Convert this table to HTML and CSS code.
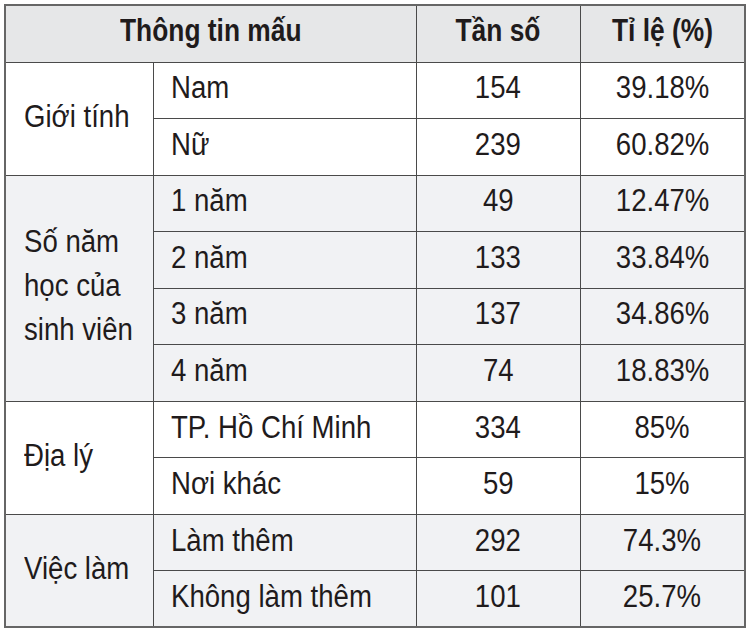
FILE: index.html
```html
<!DOCTYPE html>
<html lang="vi">
<head>
<meta charset="utf-8">
<title>Thông tin mẫu</title>
<link rel="stylesheet" href="styles.css">
</head>
<body>
<table class="stats">
  <colgroup>
    <col class="c1"><col class="c2"><col class="c3"><col class="c4">
  </colgroup>
  <thead>
    <tr class="head">
      <th colspan="2"><span class="t">Thông tin mấu</span></th>
      <th><span class="t">Tần số</span></th>
      <th><span class="t">Tỉ lệ (%)</span></th>
    </tr>
  </thead>
  <tbody class="grp">
    <tr>
      <td rowspan="2" class="g"><span class="t l">Giới tính</span></td>
      <td class="lbl"><span class="t l">Nam</span></td>
      <td><span class="t">154</span></td>
      <td><span class="t">39.18%</span></td>
    </tr>
    <tr>
      <td class="lbl"><span class="t l">Nữ</span></td>
      <td><span class="t">239</span></td>
      <td><span class="t">60.82%</span></td>
    </tr>
  </tbody>
  <tbody class="grp alt">
    <tr>
      <td rowspan="4" class="g"><span class="t l multi">Số năm<br>học của<br>sinh viên</span></td>
      <td class="lbl"><span class="t l">1 năm</span></td>
      <td><span class="t">49</span></td>
      <td><span class="t">12.47%</span></td>
    </tr>
    <tr>
      <td class="lbl"><span class="t l">2 năm</span></td>
      <td><span class="t">133</span></td>
      <td><span class="t">33.84%</span></td>
    </tr>
    <tr>
      <td class="lbl"><span class="t l">3 năm</span></td>
      <td><span class="t">137</span></td>
      <td><span class="t">34.86%</span></td>
    </tr>
    <tr>
      <td class="lbl"><span class="t l">4 năm</span></td>
      <td><span class="t">74</span></td>
      <td><span class="t">18.83%</span></td>
    </tr>
  </tbody>
  <tbody class="grp">
    <tr>
      <td rowspan="2" class="g"><span class="t l">Địa lý</span></td>
      <td class="lbl"><span class="t l">TP. Hồ Chí Minh</span></td>
      <td><span class="t">334</span></td>
      <td><span class="t">85%</span></td>
    </tr>
    <tr>
      <td class="lbl"><span class="t l">Nơi khác</span></td>
      <td><span class="t">59</span></td>
      <td><span class="t">15%</span></td>
    </tr>
  </tbody>
  <tbody class="grp alt">
    <tr>
      <td rowspan="2" class="g"><span class="t l">Việc làm</span></td>
      <td class="lbl"><span class="t l">Làm thêm</span></td>
      <td><span class="t">292</span></td>
      <td><span class="t">74.3%</span></td>
    </tr>
    <tr>
      <td class="lbl"><span class="t l">Không làm thêm</span></td>
      <td><span class="t">101</span></td>
      <td><span class="t">25.7%</span></td>
    </tr>
  </tbody>
</table>
</body>
</html>
```
FILE: styles.css
```css
html, body {
  margin: 0;
  padding: 0;
  background: #ffffff;
}

body {
  padding: 4px;
  font-family: "Liberation Sans", Arial, sans-serif;
  color: #1f1b1c;
}

.stats {
  border-collapse: collapse;
  width: 740px;
  table-layout: fixed;
  border: 2px solid #666666;
  font-size: 31px;
}

.c1 { width: 148px; }
.c2 { width: 263px; }
.c3 { width: 164px; }
.c4 { width: 165px; }

.stats th,
.stats td {
  border: 1px solid #4a4a4a;
  padding: 0 0 4px 0;
  text-align: center;
  vertical-align: middle;
  white-space: nowrap;
  line-height: 34px;
}

.head {
  height: 57px;
  background: #e6e7e8;
}

.stats th {
  font-weight: bold;
  padding-bottom: 5px;
}

.stats tbody tr {
  height: 56.55px;
}

.alt {
  background: #f1f2f4;
}

.stats td.g {
  text-align: left;
  padding-left: 18px;
}

.stats td.lbl {
  text-align: left;
  padding-left: 17px;
}

.t {
  display: inline-block;
  transform: scaleX(0.89);
  transform-origin: center center;
}

.stats th .t {
  transform: scaleX(0.85);
}

.t.l {
  transform-origin: left center;
}

.multi {
  line-height: 44px;
}
```
